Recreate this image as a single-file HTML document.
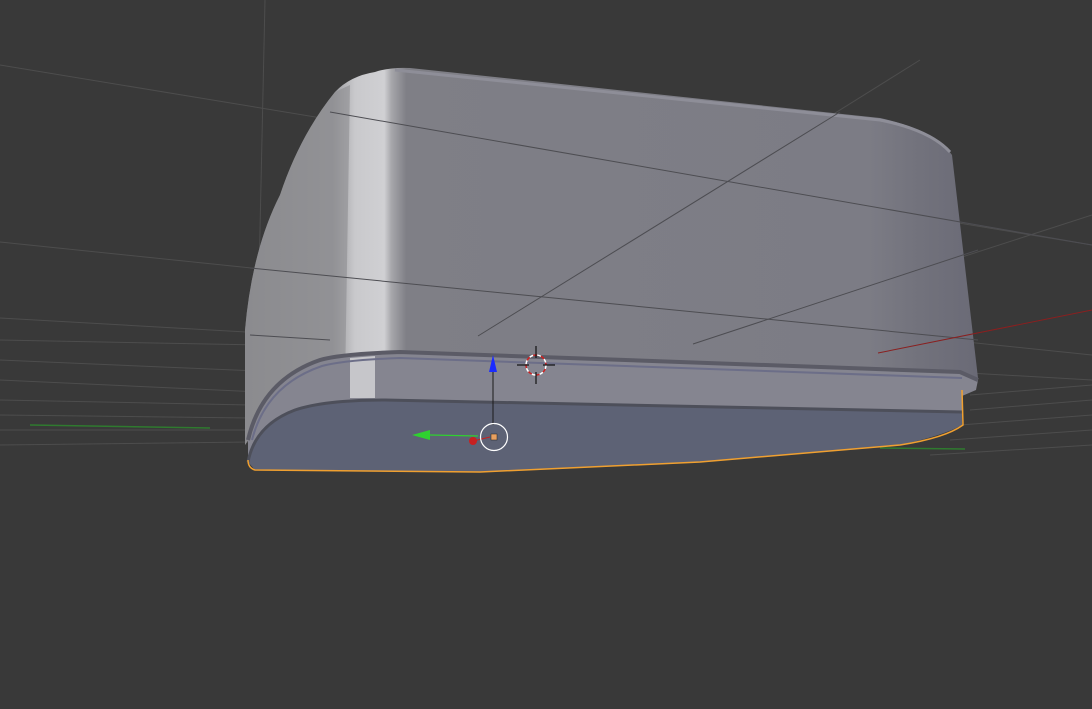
<!DOCTYPE html>
<html><head><meta charset="utf-8"><style>
html,body{margin:0;padding:0;background:#393939;overflow:hidden}
svg{display:block}
</style></head><body>
<svg width="1092" height="709" viewBox="0 0 1092 709" xmlns="http://www.w3.org/2000/svg">
<defs>
<linearGradient id="bg" x1="0" x2="1" y1="0" y2="0">
<stop offset="0" stop-color="#8a8a8e"/>
<stop offset="0.12" stop-color="#9a9a9e"/>
<stop offset="0.15" stop-color="#c9c9cc"/>
<stop offset="0.19" stop-color="#d0d0d3"/>
<stop offset="0.2" stop-color="#a6a6aa"/>
<stop offset="0.22" stop-color="#7f7f86"/>
<stop offset="0.85" stop-color="#7c7c85"/>
<stop offset="0.92" stop-color="#72727c"/>
<stop offset="1" stop-color="#6a6a76"/>
</linearGradient>
</defs>
<rect width="1092" height="709" fill="#393939"/>
<g stroke="#4d4d4d" stroke-width="1" fill="none">
<line x1="0" y1="65" x2="1092" y2="245"/>
<line x1="0" y1="242" x2="1092" y2="355"/>
<line x1="0" y1="318" x2="1092" y2="380"/>
<line x1="0" y1="340" x2="260" y2="345"/>
<line x1="0" y1="360" x2="280" y2="372"/>
<line x1="0" y1="380" x2="260" y2="392"/>
<line x1="0" y1="400" x2="250" y2="405"/>
<line x1="0" y1="415" x2="250" y2="418"/>
<line x1="0" y1="430" x2="250" y2="430"/>
<line x1="0" y1="445" x2="250" y2="442"/>
<line x1="970" y1="395" x2="1092" y2="385"/>
<line x1="970" y1="410" x2="1092" y2="400"/>
<line x1="960" y1="425" x2="1092" y2="415"/>
<line x1="950" y1="440" x2="1092" y2="430"/>
<line x1="930" y1="455" x2="1092" y2="445"/>
<line x1="265" y1="0" x2="255" y2="460"/>
<line x1="478" y1="336" x2="920" y2="60"/>
<line x1="693" y1="344" x2="1092" y2="215"/>
</g>
<line x1="30" y1="425" x2="210" y2="428" stroke="#2f7a2f" stroke-width="1.5"/>
<line x1="880" y1="448" x2="965" y2="449" stroke="#2f7a2f" stroke-width="1.5"/>
<path d="M375,72 Q390,67 410,68 L880,118 Q935,130 952,155 L978,378 Q978,390 962,395 L350,385 Q300,388 262,420 L245,445 L245,330 Q252,250 280,195 Q300,135 335,92 Q350,76 375,72 Z" fill="url(#bg)"/>
<path d="M245,330 Q252,250 280,195 Q300,135 335,92 L350,85 L345,385 L262,420 L245,445 Z" fill="#8c8c90" opacity="0.6"/>
<path d="M395,70 L880,120 Q930,130 950,152" fill="none" stroke="#8e8e98" stroke-width="3"/>
<g stroke="#4d4d52" stroke-width="1" fill="none">
<line x1="330" y1="112" x2="1092" y2="245"/>
<line x1="250" y1="268" x2="978" y2="340"/>
<line x1="478" y1="336" x2="840" y2="112"/>
<line x1="693" y1="344" x2="978" y2="250"/>
<line x1="250" y1="335" x2="330" y2="340"/>
</g>
<line x1="878" y1="353" x2="1092" y2="310" stroke="#8a1f1f" stroke-width="1"/>
<path d="M248,440 Q262,380 320,360 Q340,354 400,352 L960,372 L978,380 L976,390 L962,396 L962,412 L380,402 Q320,404 290,420 Q260,440 248,458 Z" fill="#858590"/>
<path d="M350,358 L375,356 L375,398 L350,398 Z" fill="#c6c6ca"/>
<path d="M248,440 Q262,380 320,360 Q340,354 400,352 L960,372 L978,380" fill="none" stroke="#5b5b66" stroke-width="4"/>
<path d="M252,440 Q266,385 322,366 Q345,360 400,358 L962,378" fill="none" stroke="#6c6e88" stroke-width="2"/>
<path d="M248,462 Q255,425 295,410 Q325,400 385,400 L962,412 L962,425 Q945,435 900,445 L700,462 L480,472 L255,470 Z" fill="#5d6275"/>
<path d="M248,462 Q255,425 295,410 Q325,400 385,400 L962,412" fill="none" stroke="#4d4f5a" stroke-width="3"/>
<path d="M962,390 L963,425 Q945,438 900,445 L700,462 L480,472 L255,470 Q248,468 248,460" fill="none" stroke="#f0a030" stroke-width="1.5"/>
<line x1="493" y1="372" x2="493" y2="425" stroke="#1a1a1a" stroke-width="1"/>
<polygon points="493,355 489,372 497,372" fill="#1a2bff"/>
<line x1="430" y1="435" x2="478" y2="436" stroke="#2fd12f" stroke-width="1.2"/>
<polygon points="412,435 430,430 430,440" fill="#2fd12f"/>
<circle cx="473" cy="441" r="4" fill="#c82020"/>
<line x1="473" y1="441" x2="490" y2="437" stroke="#c82020" stroke-width="1"/>
<circle cx="494" cy="437" r="13.5" fill="none" stroke="#ffffff" stroke-width="1.2"/>
<rect x="491" y="434" width="6" height="6" fill="#e8a060" stroke="#222" stroke-width="0.5"/>
<circle cx="536" cy="365" r="10" fill="none" stroke="#fff" stroke-width="1.5" stroke-dasharray="4,4"/>
<circle cx="536" cy="365" r="10" fill="none" stroke="#d02020" stroke-width="1.5" stroke-dasharray="4,4" stroke-dashoffset="4"/>
<g stroke="#111" stroke-width="1.2">
<line x1="536" y1="346" x2="536" y2="358"/><line x1="536" y1="372" x2="536" y2="384"/>
<line x1="517" y1="365" x2="529" y2="365"/><line x1="543" y1="365" x2="555" y2="365"/>
</g>
</svg>
</body></html>
